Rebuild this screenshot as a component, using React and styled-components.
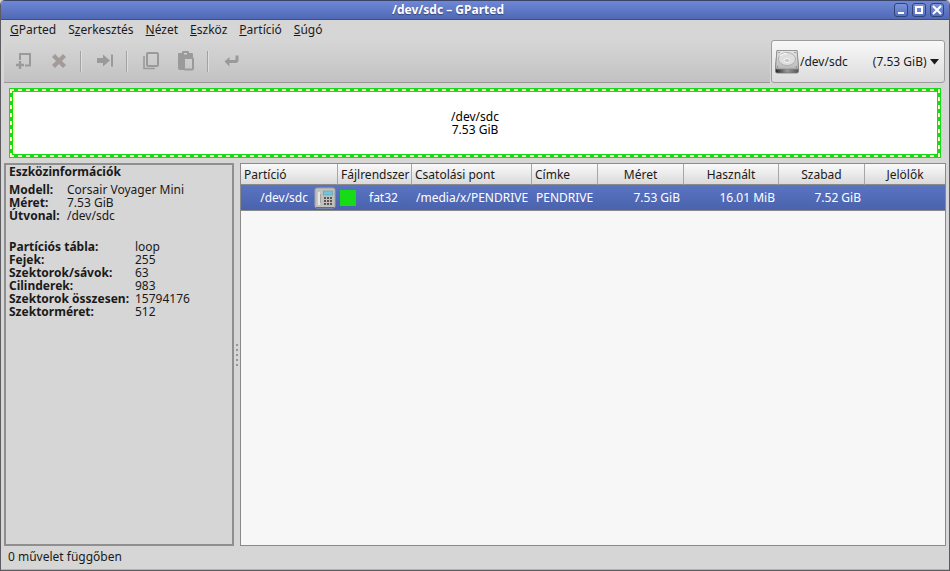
import { Fragment } from "react";
import styled, { createGlobalStyle, css } from "styled-components";

const GlobalStyle = createGlobalStyle`
  *, *::before, *::after {
    box-sizing: border-box;
  }

  body {
    margin: 0;
    background-color: #d6d6d6;
    color: #1a1a1a;
    font-family: "Noto Sans", "Open Sans", "DejaVu Sans", sans-serif;
    font-size: 12px;
    line-height: 13px;
  }
`;

const buttonReset = css`
  margin: 0;
  padding: 0;
  border: none;
  background: none;
  color: inherit;
  font: inherit;
`;

const Window = styled.div`
  display: flex;
  flex-direction: column;
  min-height: 100vh;
  border: 1px solid #5c5c60;
  border-top: none;
  border-radius: 5px 5px 0 0;
  background-color: #d6d6d6;
  overflow: hidden;
`;

// Title bar

const TitleBar = styled.header`
  display: flex;
  align-items: center;
  height: 20px;
  padding: 0 5px 0 1px;
  border-top: 1px solid #3a4468;
  border-bottom: 1px solid #3f4c86;
  background: linear-gradient(#6f88d6, #4f69b6);
`;

const Title = styled.h1`
  flex: 1;
  margin: 0;
  color: #fff;
  font-size: 12px;
  font-weight: bold;
  line-height: 18px;
  text-align: center;
  text-shadow: 0 1px 1px #33447c;
`;

const WindowButtons = styled.div`
  display: flex;
  gap: 4px;
`;

const WindowButton = styled.button`
  ${buttonReset}
  width: 14px;
  height: 14px;
  border: 1px solid #334379;
  border-radius: 3px;
  background: linear-gradient(#7d93da, #5670bd);

  svg {
    display: block;
  }
`;

// Menu and toolbar

const MenuBar = styled.nav`
  display: flex;
  gap: 12px;
  height: 20px;
  padding: 0 9px;
`;

const MenuItem = styled.button`
  ${buttonReset}
  line-height: 20px;
`;

const TopRow = styled.div`
  display: flex;
  margin: 0 4px 0 3px;
`;

const Toolbar = styled.div`
  display: flex;
  flex: 1;
  align-items: center;
  padding-left: 2px;
  border-bottom: 1px solid #989898;
  background: linear-gradient(#d6d6d6, #c2c2c2);
`;

const ToolButton = styled.button`
  ${buttonReset}
  display: flex;
  align-items: center;
  justify-content: center;
  width: 35px;
  height: 34px;
  color: #9a9a9a;
`;

const Separator = styled.span`
  width: 2px;
  height: 21px;
  margin: 0 5px 0 4px;
  border-left: 1px solid #a2a2a2;
  border-right: 1px solid #dedede;
`;

const DevicePicker = styled.label`
  display: flex;
  align-items: center;
  height: 43px;
  margin-left: 1px;
  padding: 0 5px 0 2px;
  border: 1px solid #9c9c9c;
  border-radius: 3px;
  background: linear-gradient(#f8f8f8, #dcdcdc);
`;

const DeviceSelect = styled.select`
  ${buttonReset}
  appearance: none;
  width: 130px;
  height: 20px;
  outline: none;
`;

// Disk bar with the dashed selection frame

const dash = (angle) =>
  `repeating-linear-gradient(${angle}, #ffffc0 0 4px, #18db18 4px 8px)`;

const DiskBar = styled.section`
  margin: 5px 8px 5px;
  padding: 1px;
  background-color: #18db18;
`;

const DiskDashes = styled.div`
  padding: 2px;
  background:
    ${dash("90deg")} top / 100% 2px no-repeat,
    ${dash("90deg")} bottom / 100% 2px no-repeat,
    ${dash("180deg")} left / 2px 100% no-repeat,
    ${dash("180deg")} right / 2px 100% no-repeat;
`;

const DiskBody = styled.div`
  display: flex;
  flex-direction: column;
  align-items: center;
  justify-content: center;
  height: 64px;
  border: 1px solid #18db18;
  background: linear-gradient(90deg, #ffffc8 2px, #fff 2px);
  color: #000;
`;

// Lower panes

const Panes = styled.main`
  display: flex;
  flex: 1;
  margin: 0 3px;
`;

const InfoPane = styled.aside`
  flex: none;
  width: 230px;
  padding: 0 3px;
  border: 2px solid #8f8f8f;
`;

const InfoTitle = styled.h2`
  margin: 0 0 5px;
  font-size: 12px;
  line-height: 13px;
`;

const InfoList = styled.dl`
  display: grid;
  grid-template-columns: ${(props) => (props.$wide ? 126 : 58)}px 1fr;
  margin: 0 0 18px;

  dt {
    font-weight: bold;
    white-space: nowrap;
  }

  dd {
    margin: 0;
    white-space: nowrap;
  }
`;

const Handle = styled.div`
  display: flex;
  flex: none;
  flex-direction: column;
  align-items: center;
  justify-content: center;
  gap: 3px;
  width: 6px;
`;

const Grip = styled.span`
  width: 2px;
  height: 2px;
  background-color: #969696;
`;

const TreePane = styled.section`
  flex: 1;
  min-width: 0;
  border: 1px solid #8a8a8a;
  background-color: #f7f7f7;
`;

const PartitionTable = styled.table`
  width: 100%;
  border-collapse: separate;
  border-spacing: 0;
  table-layout: fixed;
`;

const HeadCell = styled.th`
  width: ${(props) => (props.$width ? `${props.$width}px` : "auto")};
  height: 21px;
  padding: 0 3px;
  border-right: 1px solid #a6a6a6;
  border-bottom: 1px solid #8a8a8a;
  background: linear-gradient(#fafafa, #dadada);
  font-weight: normal;
  text-align: ${(props) => props.$align || "left"};
  white-space: nowrap;

  &:last-child {
    border-right: none;
  }
`;

const SelectedRow = styled.tr`
  background: linear-gradient(#5a74c2, #4a62ac);
  color: #fff;
`;

const Cell = styled.td`
  height: 26px;
  padding: 0 4px;
  border-bottom: 1px solid #8a8a8a;
  text-align: ${(props) => props.$align || "left"};
  white-space: nowrap;
`;

const CellContent = styled.div`
  display: flex;
  align-items: center;
  justify-content: ${(props) => (props.$end ? "flex-end" : "flex-start")};
  gap: ${(props) => (props.$end ? 6 : 13)}px;
  margin: 0 -2px;
`;

const FsColor = styled.span`
  width: 16px;
  height: 16px;
  background-color: #18db18;
`;

const StatusBar = styled.footer`
  padding: 0 7px 1px;
  border-bottom: 1px solid #b4b4b4;
  line-height: 22px;
`;

// Icons

const NewIcon = () => (
  <svg width="16" height="16" viewBox="0 0 16 16" fill="none" stroke="currentColor" strokeWidth="2">
    <path d="M4 7V1H14V12.500H9" />
    <path d="M0 12H8M4 8V16" strokeWidth="2.4" />
  </svg>
);

const DeleteIcon = () => (
  <svg width="16" height="16" viewBox="0 0 16 16">
    <path
      d="M4 1L8 5L12 1L15 4L11 8L15 12L12 15L8 11L4 15L1 12L5 8L1 4Z"
      fill="#a39a9a"
    />
  </svg>
);

const ResizeIcon = () => (
  <svg width="18" height="14" viewBox="0 0 18 14" fill="currentColor">
    <path d="M1 4H7V0.500L14 6.500L7 12.500V9H1Z" />
    <path d="M15 0.500H17V12.500H15Z" />
  </svg>
);

const CopyIcon = () => (
  <svg width="16" height="18" viewBox="0 0 16 18" fill="none" stroke="currentColor">
    <rect x="4" y="1" width="11" height="13" rx="1" strokeWidth="2" />
    <path d="M1 4V16.500H12" strokeWidth="1.6" />
  </svg>
);

const PasteIcon = () => (
  <svg width="16" height="20" viewBox="0 0 16 20">
    <path
      d="M1 2H4V1Q4 0 5 0H10Q11 0 11 1V2H14Q15 2 15 3V6H6V19H2Q0 19 0 17V3Q0 2 1 2ZM6 2V3.500H9V2Z"
      fill="currentColor"
      fillRule="evenodd"
    />
    <rect x="6" y="7" width="9" height="11.500" rx="1" fill="none" stroke="currentColor" strokeWidth="2" />
  </svg>
);

const ApplyIcon = () => (
  <svg width="16" height="12" viewBox="0 0 16 12">
    <path d="M5.500 2V5H10.500Q11.500 5 11.500 4V0.500H14.500V5Q14.500 8 11.500 8H5.500V11.500L0.500 6.500Z" fill="currentColor" />
  </svg>
);

const DriveIcon = () => (
  <svg width="26" height="26" viewBox="0 0 26 26">
    <defs>
      <linearGradient id="driveTop" x1="0" y1="0" x2="0" y2="1">
        <stop offset="0" stopColor="#e8e8e8" />
        <stop offset="1" stopColor="#b8b8b8" />
      </linearGradient>
      <linearGradient id="driveFront" x1="0" y1="0" x2="1" y2="0">
        <stop offset="0" stopColor="#222" />
        <stop offset="0.5" stopColor="#999" />
        <stop offset="1" stopColor="#555" />
      </linearGradient>
    </defs>
    <path d="M3 1.500H23L24.500 19V22Q24.500 24 23 24H3Q1.500 24 1.500 22V19Z" fill="url(#driveFront)" stroke="#777" strokeWidth="0.8" />
    <path d="M3 1.500H23L24.500 19Q24.500 20 23 20H3Q1.500 20 1.500 19Z" fill="url(#driveTop)" stroke="#8d8d8d" strokeWidth="0.8" />
    <ellipse cx="13" cy="10" rx="8.500" ry="6.500" fill="#dedede" stroke="#a6a6a6" strokeWidth="0.8" />
    <path d="M6 7Q9 4 13 4.500" fill="none" stroke="#fff" />
    <ellipse cx="13" cy="11.500" rx="3" ry="2" fill="#c8c8c8" stroke="#f4f4f4" />
    <circle cx="5" cy="3.500" r="0.7" fill="#777" />
    <circle cx="21" cy="3.500" r="0.7" fill="#777" />
    <circle cx="3.500" cy="18" r="0.7" fill="#777" />
    <circle cx="22.500" cy="18" r="0.7" fill="#777" />
  </svg>
);

const PhoneIcon = () => (
  <svg width="22" height="22" viewBox="0 0 22 22">
    <rect x="1" y="1" width="20" height="20" rx="2" fill="#c0c0bc" stroke="#a2a29e" />
    <path d="M2 20.500H20" stroke="#6c6c68" />
    <rect x="9.500" y="4" width="9" height="4" fill="#72c4dc" stroke="#5b9db8" strokeWidth="0.6" />
    <path d="M5 6V17" stroke="#e6e6e6" strokeWidth="2.4" strokeLinecap="round" />
    <path d="M6.500 7V16" stroke="#999" strokeWidth="0.8" />
    <g fill="#555">
      {[10, 13, 16].map((y) =>
        [10, 13, 16].map((x) => <rect key={`${x}-${y}`} x={x} y={y} width="2" height="2" />)
      )}
    </g>
  </svg>
);

const ArrowDown = () => (
  <svg width="9" height="6" viewBox="0 0 9 6">
    <path d="M0 0H9L4.500 5.500Z" fill="#1c1c1c" />
  </svg>
);

const menus = [
  ["", "G", "Parted"],
  ["S", "z", "erkesztés"],
  ["", "N", "ézet"],
  ["", "E", "szköz"],
  ["", "P", "artíció"],
  ["", "S", "úgó"],
];

const tools = [
  [
    { label: "Új", Icon: NewIcon },
    { label: "Törlés", Icon: DeleteIcon },
  ],
  [{ label: "Átméretezés/Mozgatás", Icon: ResizeIcon }],
  [
    { label: "Másolás", Icon: CopyIcon },
    { label: "Beillesztés", Icon: PasteIcon },
  ],
  [{ label: "Alkalmaz", Icon: ApplyIcon }],
];

const windowButtons = [
  { label: "Minimalizálás", path: "M3 9H9" },
  { label: "Maximalizálás", path: "M3 3H9V9H3Z" },
  { label: "Bezárás", path: "M2 2L10 10M10 2L2 10" },
];

const deviceInfo = [
  ["Modell:", "Corsair Voyager Mini"],
  ["Méret:", "7.53 GiB"],
  ["Útvonal:", "/dev/sdc"],
];

const geometry = [
  ["Partíciós tábla:", "loop"],
  ["Fejek:", "255"],
  ["Szektorok/sávok:", "63"],
  ["Cilinderek:", "983"],
  ["Szektorok összesen:", "15794176"],
  ["Szektorméret:", "512"],
];

const columns = [
  { name: "Partíció", width: 97 },
  { name: "Fájlrendszer", width: 74 },
  { name: "Csatolási pont", width: 120 },
  { name: "Címke", width: 66 },
  { name: "Méret", width: 86, align: "center" },
  { name: "Használt", width: 95, align: "center" },
  { name: "Szabad", width: 86, align: "center" },
  { name: "Jelölők", align: "center" },
];

function Info({ rows, wide }) {
  return (
    <InfoList $wide={wide}>
      {rows.map(([name, value]) => (
        <Fragment key={name}>
          <dt>{name}</dt>
          <dd>{value}</dd>
        </Fragment>
      ))}
    </InfoList>
  );
}

function App() {
  return (
    <Window>
      <GlobalStyle />
      <TitleBar>
        <Title>/dev/sdc – GParted</Title>
        <WindowButtons>
          {windowButtons.map(({ label, path }) => (
            <WindowButton key={label} aria-label={label}>
              <svg width="12" height="12" viewBox="0 0 12 12" fill="none" stroke="#fff" strokeWidth="2">
                <path d={path} />
              </svg>
            </WindowButton>
          ))}
        </WindowButtons>
      </TitleBar>

      <MenuBar>
        {menus.map(([before, key, after]) => (
          <MenuItem key={key + after}>
            {before}
            <u>{key}</u>
            {after}
          </MenuItem>
        ))}
      </MenuBar>

      <TopRow>
        <Toolbar role="toolbar">
          {tools.map((group, index) => (
            <Fragment key={index}>
              {index > 0 && <Separator />}
              {group.map(({ label, Icon }) => (
                <ToolButton key={label} aria-label={label} disabled>
                  <Icon />
                </ToolButton>
              ))}
            </Fragment>
          ))}
        </Toolbar>
        <DevicePicker>
          <DriveIcon />
          <DeviceSelect aria-label="Eszköz">
            <option>{"/dev/sdc" + "\u00a0".repeat(8) + "(7.53 GiB)"}</option>
          </DeviceSelect>
          <ArrowDown />
        </DevicePicker>
      </TopRow>

      <DiskBar>
        <DiskDashes>
          <DiskBody>
            <span>/dev/sdc</span>
            <span>7.53 GiB</span>
          </DiskBody>
        </DiskDashes>
      </DiskBar>

      <Panes>
        <InfoPane>
          <InfoTitle>Eszközinformációk</InfoTitle>
          <Info rows={deviceInfo} />
          <Info rows={geometry} wide />
        </InfoPane>
        <Handle>
          {[0, 1, 2, 3, 4].map((n) => (
            <Grip key={n} />
          ))}
        </Handle>
        <TreePane>
          <PartitionTable>
            <thead>
              <tr>
                {columns.map(({ name, width, align }) => (
                  <HeadCell key={name} $width={width} $align={align}>
                    {name}
                  </HeadCell>
                ))}
              </tr>
            </thead>
            <tbody>
              <SelectedRow>
                <Cell>
                  <CellContent $end>
                    /dev/sdc
                    <PhoneIcon />
                  </CellContent>
                </Cell>
                <Cell>
                  <CellContent>
                    <FsColor />
                    fat32
                  </CellContent>
                </Cell>
                <Cell>/media/x/PENDRIVE</Cell>
                <Cell>PENDRIVE</Cell>
                <Cell $align="right">7.53 GiB</Cell>
                <Cell $align="right">16.01 MiB</Cell>
                <Cell $align="right">7.52 GiB</Cell>
                <Cell />
              </SelectedRow>
            </tbody>
          </PartitionTable>
        </TreePane>
      </Panes>

      <StatusBar>0 művelet függőben</StatusBar>
    </Window>
  );
}

export default App;
